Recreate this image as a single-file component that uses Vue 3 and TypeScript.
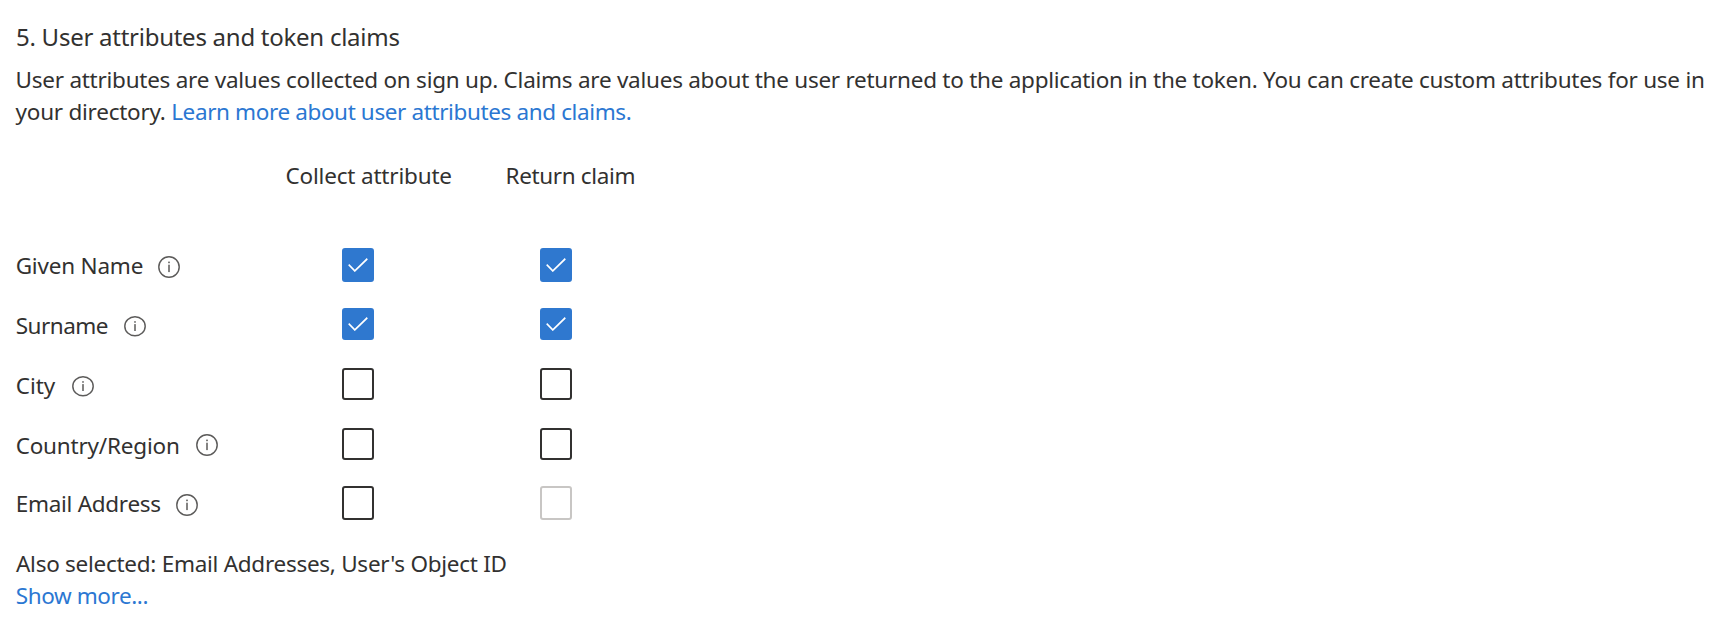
<script setup lang="ts">
interface Box {
  checked: boolean
  tall?: boolean
  disabled?: boolean
}
interface Attribute {
  key: string
  label: string
  wide: boolean
  collect: Box
  claim: Box
}

const attributes: Attribute[] = [
  { key: 'given', label: 'Given Name', wide: true, collect: { checked: true, tall: true }, claim: { checked: true, tall: true } },
  { key: 'surname', label: 'Surname', wide: false, collect: { checked: true }, claim: { checked: true } },
  { key: 'city', label: 'City', wide: false, collect: { checked: false }, claim: { checked: false } },
  { key: 'country', label: 'Country/Region', wide: true, collect: { checked: false }, claim: { checked: false } },
  { key: 'email', label: 'Email Address', wide: true, collect: { checked: false, tall: true }, claim: { checked: false, tall: true, disabled: true } },
]
</script>

<template>
  <main class="panel">
    <h2 class="title">5. User attributes and token claims</h2>
    <p class="intro">
      User attributes are values collected on sign up. Claims are values about the user returned to the application in the token. You can create custom attributes for use in<br />
      <span class="lead">your directory. </span><a class="link learn">Learn more about user attributes and claims.</a>
    </p>

    <div class="head">
      <span class="head-collect">Collect attribute</span>
      <span class="head-claim">Return claim</span>
    </div>

    <div class="rows">
      <div v-for="a in attributes" :key="a.key" class="row" :class="a.key">
        <div class="name">
          <span class="label">{{ a.label }}</span>
          <svg class="info" :class="{ wide: a.wide }" viewBox="0 0 22 22" preserveAspectRatio="none">
            <circle cx="11" cy="11" r="10.2" fill="none" stroke="#5c5b5a" stroke-width="1.45" />
            <rect x="10.25" y="8.7" width="1.5" height="7.4" fill="#5c5b5a" />
            <rect x="10.2" y="5.6" width="1.6" height="1.6" fill="#5c5b5a" />
          </svg>
        </div>
        <div
          v-for="(box, i) in [a.collect, a.claim]"
          :key="i"
          class="box"
          :class="{ checked: box.checked, tall: box.tall, disabled: box.disabled }"
        >
          <svg v-if="box.checked" class="tick" viewBox="0 0 20 13" preserveAspectRatio="none">
            <path d="M0.7 6.2 L6.8 12 L19.3 0.7" fill="none" stroke="#fff" stroke-width="1.6" />
          </svg>
        </div>
      </div>
    </div>

    <p class="also">Also selected: Email Addresses, User's Object ID</p>
    <a class="link more">Show more...</a>
  </main>
</template>

<style>
body {
  background: #fff;
}
</style>

<style scoped>
.panel {
  box-sizing: border-box;
  width: 1718px;
  height: 634px;
  padding: 20.5px 0 0 15px;
  overflow: hidden;
  background: #fff;
  color: #323130;
  font: 22.5px/32px "Noto Sans", "Open Sans", sans-serif;
}
.title {
  margin: 0;
  padding-left: 1px;
  font-size: 24px;
  font-weight: 400;
  letter-spacing: -0.26px;
}
.intro {
  margin: 11px 0 0;
  padding-left: 0.6px;
  letter-spacing: -0.254px;
  white-space: nowrap;
}
.lead {
  letter-spacing: -0.25px;
}
.link {
  color: #2b77d2;
}
.learn {
  letter-spacing: -0.38px;
}
.head {
  display: flex;
  margin-top: 32.5px;
  padding-left: 270.5px;
}
.head-collect {
  width: 220px;
  letter-spacing: -0.18px;
}
.head-claim {
  letter-spacing: -0.35px;
}
.rows {
  display: grid;
  grid-template-rows: 60px 60px 60px 58px 60px;
  margin-top: 56px;
}
.row {
  display: grid;
  grid-template-columns: 327px 198px 32px;
  align-items: start;
}
.name {
  display: flex;
  padding-top: 2px;
}
.label {
  box-sizing: border-box;
  width: 143px;
  padding-left: 0.7px;
  letter-spacing: -0.2px;
}
.surname .label {
  width: 109px;
  letter-spacing: -0.5px;
}
.city .label {
  width: 57px;
  letter-spacing: 0;
}
.country .label {
  width: 181px;
  letter-spacing: -0.2px;
}
.email .label {
  width: 161px;
  letter-spacing: -0.28px;
}
.info {
  width: 22px;
  height: 20.5px;
  margin-top: 6px;
}
.info.wide {
  height: 22px;
}
.country .info {
  margin-top: 4px;
}
.box {
  box-sizing: border-box;
  display: flex;
  align-items: center;
  justify-content: center;
  width: 32px;
  height: 32px;
  border: 2px solid #323130;
  border-radius: 3px;
}
.box.tall {
  height: 34px;
}
.box.checked {
  border-color: #2f78cf;
  background: #2f78cf;
}
.box.disabled {
  border-color: #c8c6c4;
}
.tick {
  width: 20px;
  height: 14px;
}
.also {
  margin: 2px 0 0;
  padding-left: 1px;
  letter-spacing: -0.27px;
}
.more {
  padding-left: 0.7px;
  letter-spacing: -0.4px;
}
</style>
